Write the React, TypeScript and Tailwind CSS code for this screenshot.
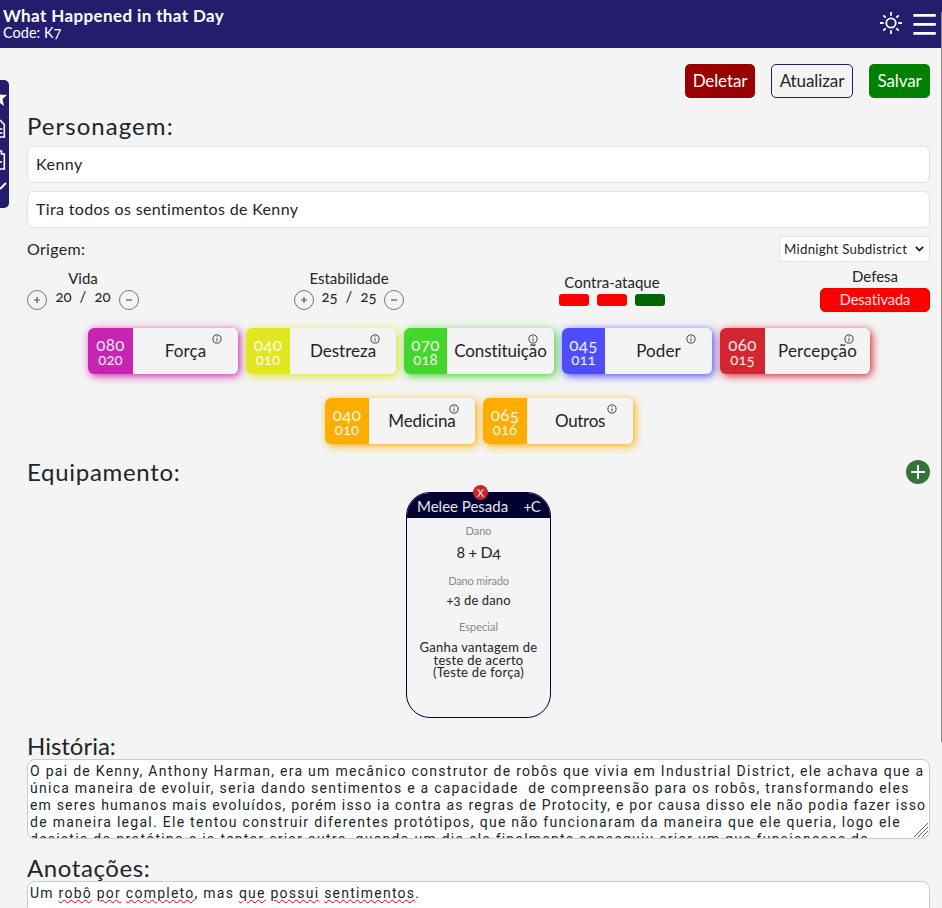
import type { ReactNode } from "react";

const skills = [
  { name: "Força", total: "080", mod: "020", w: "w-[45px]", bg: "bg-[#c724b1]", glow: "shadow-[2px_2px_8px_#c724b1]", ls: "tracking-[0.1px]" },
  { name: "Destreza", total: "040", mod: "010", w: "w-[44px]", bg: "bg-[#e0e722]", glow: "shadow-[2px_2px_8px_#e0e722]", ls: "tracking-[0px]" },
  { name: "Constituição", total: "070", mod: "018", w: "w-[43px]", bg: "bg-[#44d62c]", glow: "shadow-[2px_2px_8px_#44d62c]", ls: "tracking-[-0.1px]" },
  { name: "Poder", total: "045", mod: "011", w: "w-[43px]", bg: "bg-[#4d4dff]", glow: "shadow-[2px_2px_8px_#4d4dff]", ls: "tracking-[0.1px]" },
  { name: "Percepção", total: "060", mod: "015", w: "w-[45px]", bg: "bg-[#d22730]", glow: "shadow-[2px_2px_8px_#d22730]", ls: "tracking-[0.2px]" },
  { name: "Medicina", total: "040", mod: "010", w: "w-[44px]", bg: "bg-[#ffad00]", glow: "shadow-[2px_2px_8px_#ffad00]", ls: "tracking-[-0.1px]" },
  { name: "Outros", total: "065", mod: "016", w: "w-[44px]", bg: "bg-[#ffad00]", glow: "shadow-[2px_2px_8px_#ffad00]", ls: "tracking-[-0.3px]" },
];

function Skill({ s }: { s: (typeof skills)[number] }) {
  return (
    <div className={`flex h-[46px] w-[150px] overflow-hidden rounded-[6px] ${s.glow}`}>
      <div className={`flex ${s.w} flex-col items-center justify-center text-white/90 ${s.bg}`}>
        <span className="h-[15px] text-[17px] leading-[15px] tracking-[0.4px]">{s.total}</span>
        <span className="h-[14px] text-[15px] leading-[14px]">{s.mod}</span>
      </div>
      <div className="relative flex flex-1 items-center justify-center bg-[#f4f4f4] text-[17px]">
        <span className={s.ls}>{s.name}</span>
        <svg className="absolute right-[16px] top-[6px]" width="10" height="10" viewBox="0 0 10 10" fill="none" stroke="#333">
          <circle cx="5" cy="5" r="4.1" strokeWidth="0.9" />
          <path d="M5 4.4v3M5 2.4v1" strokeWidth="0.9" />
        </svg>
      </div>
    </div>
  );
}

function Round({ children }: { children: ReactNode }) {
  return (
    <span className="mt-[2px] flex size-5 items-center justify-center rounded-full border border-[#777]">
      <svg width="8" height="8" viewBox="0 0 8 8" stroke="#555" strokeWidth="1.2">{children}</svg>
    </span>
  );
}

function Meter({ label, value, width }: { label: string; value: string; width: string }) {
  return (
    <div className={`flex ${width} flex-col items-center pt-[8px]`}>
      <span className="h-[17px] text-[15px] leading-[17px]">{label}</span>
      <div className="flex w-full items-start justify-between pt-px">
        <Round><path d="M1 4h6M4 1v6" /></Round>
        <span className="flex gap-2 text-[15px] leading-[17px]">
          <span>{value}</span><span>/</span><span>{value}</span>
        </span>
        <Round><path d="M1 4h6" /></Round>
      </div>
    </div>
  );
}

function Wavy({ children }: { children: ReactNode }) {
  return <span className="underline decoration-[#d40000] decoration-wavy decoration-1 underline-offset-[1px]">{children}</span>;
}

const historyLines = [
  { t: "O pai de Kenny, Anthony Harman, era um mecânico construtor de robôs que vivia em Industrial District, ele achava que a", c: "tracking-[1.28px]" },
  { t: "única maneira de evoluir, seria dando sentimentos e a capacidade  de compreensão para os robôs, transformando eles", c: "tracking-[1.26px]" },
  { t: "em seres humanos mais evoluídos, porém isso ia contra as regras de Protocity, e por causa disso ele não podia fazer isso", c: "tracking-[1.18px]" },
  { t: "de maneira legal. Ele tentou construir diferentes protótipos, que não funcionaram da maneira que ele queria, logo ele", c: "tracking-[1.28px]" },
  { t: "desistia do protótipo e ia tentar criar outro, quando um dia ele finalmente conseguiu criar um que funcionasse da", c: "tracking-[1.23px]" },
];

export default function App() {
  return (
    <div className="relative h-[908px] overflow-hidden bg-[#f4f4f4] font-['Lato',sans-serif] text-[#212529] [font-variant-ligatures:none] [font-variant-numeric:oldstyle-nums]">
      <header className="flex h-12 items-center justify-between bg-[#241c6c] pl-[3px] pr-[6px] text-white">
        <div className="flex flex-col">
          <h1 className="h-[18px] text-[17px] font-bold leading-[17px] tracking-[0.38px]">What Happened in that Day</h1>
          <span className="h-[16px] text-[14.5px] leading-[16px]">Code: K7</span>
        </div>
        <div className="flex items-center gap-[11px]">
          <svg width="22" height="22" viewBox="0 0 22 22" fill="none" stroke="white" strokeWidth="1.8" className="mb-[2px]">
            <circle cx="11" cy="11" r="4.7" />
            <path d="M11 0v3.7M11 18.3V22M0 11h3.7M18.3 11H22M3.3 3.3l2.4 2.4M16.3 16.3l2.4 2.4M18.7 3.3l-2.4 2.4M5.7 16.3l-2.4 2.4" />
          </svg>
          <svg width="23" height="22" viewBox="0 0 23 22" stroke="white" strokeWidth="2.6"><path d="M.4 2.4h22.4M.4 11.4h22.4M.4 20.4h22.4" /></svg>
        </div>
      </header>

      <nav className="absolute left-0 top-20 h-32 w-[9px] overflow-hidden rounded-r-[5px] bg-[#241c6c]">
        <svg width="9" height="128" viewBox="0 0 9 128" fill="none" stroke="white">
          <path fill="white" stroke="none" d="M0 14.5 7 15 2.5 19 4 26 0 23z" />
          <path strokeWidth="1.6" d="M0 40 4.3 44.5V57H0M0 49h2.5M0 53h2.5" />
          <path strokeWidth="1.6" d="M0 71h1.5v3h2.8v15H0M0 82h2" />
          <path strokeWidth="2" d="M0 109 6 103" />
        </svg>
      </nav>

      <main className="flex flex-col pl-[27px] pr-3">
        <div className="flex justify-end gap-4 pt-4 text-[17px] tracking-[-0.1px]">
          <button className="h-[34px] w-[70px] rounded-[5px] bg-[#990000] text-white">Deletar</button>
          <button className="h-[34px] w-[82px] rounded-[5px] border border-[#241c6c]">Atualizar</button>
          <button className="h-[34px] w-[61px] rounded-[5px] bg-[#008000] text-white">Salvar</button>
        </div>
        <h2 className="mt-[14px] h-[34px] text-[24px] leading-[28px] tracking-[1.05px]">Personagem:</h2>
        <div className="flex h-[37px] items-center rounded-[6px] border border-[#dee2e6] bg-white px-2 pb-[2px] text-[16px] tracking-[0.5px]">Kenny</div>
        <div className="mt-2 flex h-[37px] items-center rounded-[6px] border border-[#dee2e6] bg-white px-2 pb-[2px] text-[16px] tracking-[0.34px]">Tira todos os sentimentos de Kenny</div>
        <div className="mt-2 flex h-[26px] items-center justify-between">
          <span className="text-[16px] tracking-[0.3px]">Origem:</span>
          <div className="flex h-[26px] w-[151px] items-center justify-between rounded-[3px] border border-[#dee2e6] bg-white pl-1 pr-[5px] text-[13.3px] tracking-[0.25px]">
            <span className="pt-px">Midnight Subdistrict</span>
            <svg width="9" height="6" viewBox="0 0 9 6" fill="none" stroke="#212529" strokeWidth="1.8"><path d="M.8.8 4.5 4.5 8.2.8" /></svg>
          </div>
        </div>
        <div className="flex h-[66px] items-start justify-between">
          <Meter label="Vida" value="20" width="w-[112px]" />
          <Meter label="Estabilidade" value="25" width="w-[110px]" />
          <div className="flex flex-col items-center pt-[12px]">
            <span className="h-[20px] text-[15px] leading-[17px]">Contra-ataque</span>
            <div className="flex gap-2">
              <span className="h-3 w-[30px] rounded-[3px] bg-[#ff0000]" />
              <span className="h-3 w-[30px] rounded-[3px] bg-[#ff0000]" />
              <span className="h-3 w-[30px] rounded-[3px] bg-[#006400]" />
            </div>
          </div>
          <div className="flex w-[110px] flex-col items-center pt-[6px]">
            <span className="h-[20px] text-[15px] leading-[17px]">Defesa</span>
            <span className="flex h-6 w-full items-center justify-center rounded-[5px] border border-[#e60000] bg-[#ff0000] text-[14.5px] text-white/90">Desativada</span>
          </div>
        </div>
        <div className="flex flex-wrap justify-center gap-x-2 gap-y-6 pl-px">
          {skills.map((s) => <Skill key={s.name} s={s} />)}
        </div>
        <div className="mt-[16px] flex h-[32px] items-start justify-between">
          <h2 className="text-[24px] leading-[24px] tracking-[0.7px]">Equipamento:</h2>
          <span className="flex size-6 items-center justify-center rounded-full bg-[#35733a]">
            <svg width="14" height="14" viewBox="0 0 14 14" stroke="white" strokeWidth="1.8"><path d="M0 7h14M7 0v14" /></svg>
          </span>
        </div>
        <div className="relative h-[226px] w-[145px] self-center">
          <article className="flex h-full flex-col items-center overflow-hidden rounded-[24px] border border-[#00003a] text-center">
            <header className="flex h-[25px] w-full shrink-0 items-center justify-between bg-[#000030] px-[10px] pt-px text-[15px] text-white/90"><span>Melee Pesada</span><span className="tracking-[-0.8px]">+C</span></header>
            <span className="mt-[6px] h-[14px] text-[11px] leading-[14px] text-[#8a8a8a]">Dano</span>
            <span className="mt-[4px] h-[20px] text-[16px] leading-[20px] tracking-[-0.4px]">8 + D4</span>
            <span className="mt-[12px] h-[14px] text-[11px] leading-[14px] tracking-[-0.15px] text-[#8a8a8a]">Dano mirado</span>
            <span className="mt-[3px] h-[18px] text-[13px] leading-[18px] tracking-[0.1px]">+3 de dano</span>
            <span className="mt-[11px] h-[14px] text-[11px] leading-[14px] text-[#8a8a8a]">Especial</span>
            <p className="mt-[7px] text-[13px] leading-[12.5px] tracking-[0.3px]">Ganha vantagem de<br />teste de acerto<br />(Teste de força)</p>
          </article>
          <span className="absolute left-[67px] top-[-7px] flex size-[15px] items-center justify-center rounded-full bg-[#cc2528] text-[11px] leading-none text-white/90">X</span>
        </div>
        <h2 className="mt-[14px] h-[27px] text-[24px] leading-[28px]">História:</h2>
        <div className="relative h-20 overflow-hidden rounded-[8px] border border-[#ccc] bg-white px-[2px] pt-[3px] font-['Roboto',sans-serif] text-[14px] leading-[17px]">
          {historyLines.map((l) => <p key={l.t} className={`whitespace-pre ${l.c}`}>{l.t}</p>)}
          <svg className="absolute bottom-[1px] right-[1px]" width="14" height="14" viewBox="0 0 14 14" stroke="#666"><path d="M0 14 14 0M4 14 14 4M8 14 14 8M12 14l2-2" /></svg>
        </div>
        <h2 className="mt-[15px] h-[27px] text-[24px] leading-[28px] tracking-[0.6px]">Anotações:</h2>
        <div className="h-20 shrink-0 rounded-[8px] border border-[#ccc] bg-white px-[2px] pt-[3px] font-['Roboto',sans-serif] text-[14px] leading-[17px] tracking-[1.25px]">
          Um <Wavy>robô</Wavy> <Wavy>por</Wavy> <Wavy>completo</Wavy>, mas <Wavy>que</Wavy> <Wavy>possui</Wavy> <Wavy>sentimentos</Wavy>.
        </div>
      </main>
      <div className="absolute right-0 top-3 h-[730px] w-px bg-[#888]" />
    </div>
  );
}
